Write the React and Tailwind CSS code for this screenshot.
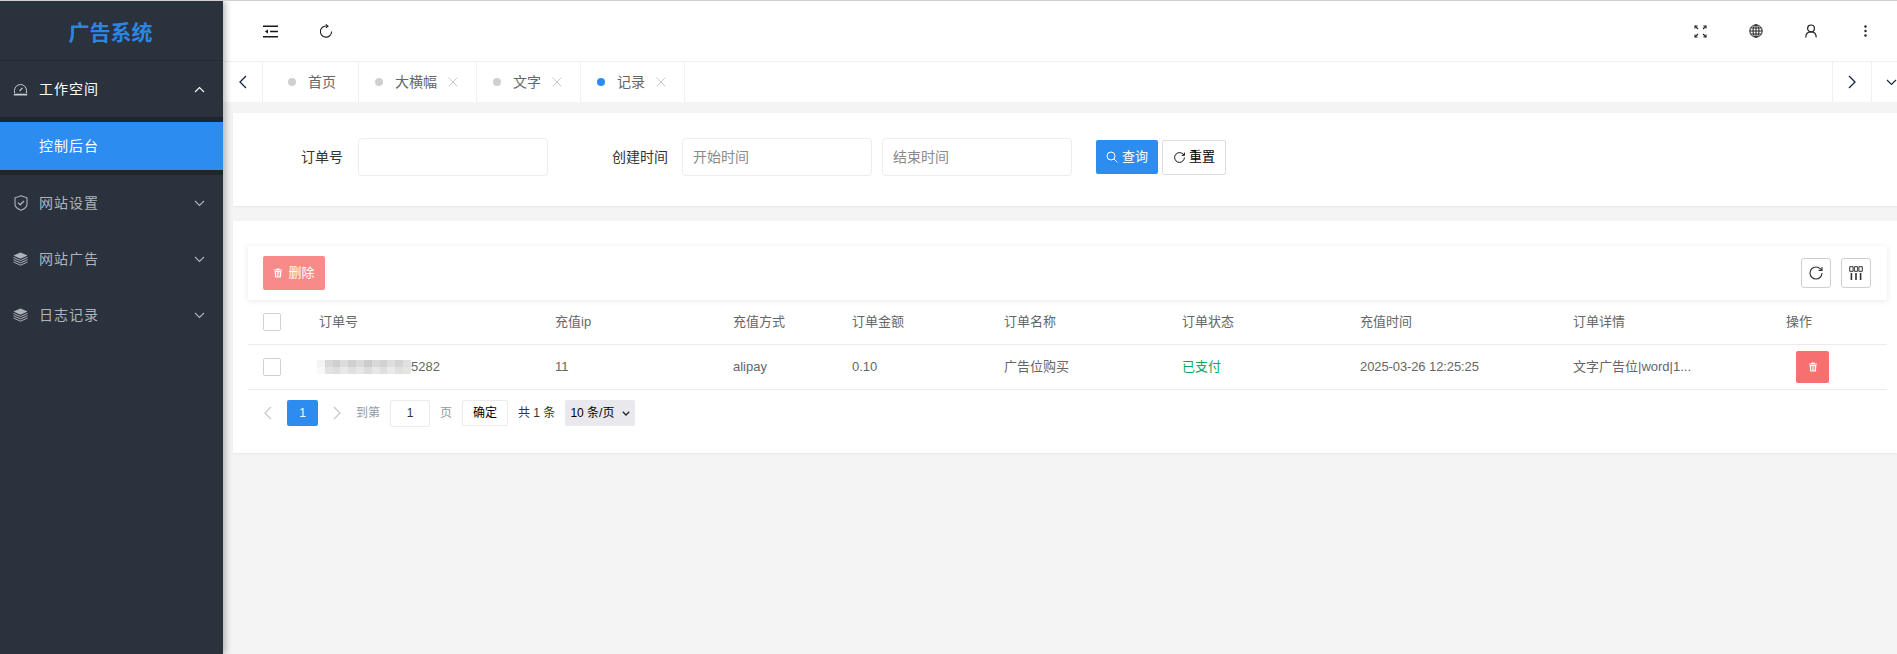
import React from "react";

const Gauge = () => (
  <svg width="15" height="13" viewBox="0 0 15 13" fill="none" stroke="#c8cacd" strokeWidth="1">
    <path d="M1.5 10V7.5a6 6 0 0 1 12 0V10" />
    <path d="M6.5 8l3-3.2" strokeWidth="1.2" />
    <path d="M.8 11.6h13.4" strokeWidth="1.8" />
  </svg>
);
const Shield = () => (
  <svg width="14" height="16" viewBox="0 0 14 16" fill="none" stroke="currentColor" strokeWidth="1.1">
    <path d="M7 .8l6 2v6.4c0 2.8-3 4.9-6 6-3-1.1-6-3.2-6-6V2.8z" />
    <path d="M4 7.6l2.2 2.2L10 6" strokeWidth="1.3" />
  </svg>
);
const Layers = () => (
  <svg width="15" height="14" viewBox="0 0 15 14" fill="none" stroke="currentColor" strokeWidth="1">
    <path d="M7.5.4L14.6 3.6 7.5 6.8.4 3.6z" fill="currentColor" stroke="none" />
    <path d="M.5 5.4l7 3.2 7-3.2M.5 7.7l7 3.2 7-3.2M.5 10l7 3.2 7-3.2" />
  </svg>
);
const Chev = ({ up }) => (
  <svg width="11" height="7" viewBox="0 0 11 7" fill="none" stroke="currentColor" strokeWidth="1.1">
    <path d={up ? "M1 6l4.5-4.5L10 6" : "M1 1l4.5 4.5L10 1"} />
  </svg>
);
const Refresh = ({ size = 14 }) => (
  <svg width={size} height={size} viewBox="0 0 14 14" fill="none" stroke="currentColor" strokeWidth="1.1">
    <path d="M8.6 2.2A5.6 5.6 0 1 0 12.6 7.6" />
    <path d="M6.8.4l2.2 1.8-2.2 1.7" />
  </svg>
);
const RotateCw = ({ size = 15 }) => (
  <svg width={size} height={size} viewBox="0 0 24 24" fill="none" stroke="currentColor" strokeWidth="1.7">
    <path d="M21 12a9 9 0 1 1-9-9c2.52 0 4.93 1 6.74 2.74L21 8" />
    <path d="M21 3v5h-5" />
  </svg>
);
const Trash = ({ size = 10 }) => (
  <svg width={size} height={size} viewBox="0 0 10 10" fill="currentColor">
    <path d="M3.6.4h2.8l.4 1h2.4v1H.8v-1h2.4zM1.6 3h6.8l-.5 6.6H2.1zm1.4 1v4.6h.8V4zm1.7 0v4.6h.8V4zm1.6 0v4.6h.7V4z" />
  </svg>
);
const X = () => (
  <svg width="10" height="10" viewBox="0 0 10 10" fill="none" stroke="#c8c8c8" strokeWidth="1">
    <path d="M.5.5l9 9M9.5.5l-9 9" />
  </svg>
);
const Arrow = ({ left, color = "#17233d", w = 8, h = 14 }) => (
  <svg width={w} height={h} viewBox="0 0 8 14" fill="none" stroke={color} strokeWidth="1.3">
    <path d={left ? "M7 1L1 7l6 6" : "M1 1l6 6-6 6"} />
  </svg>
);

const Menu = ({ icon, label, open }) => (
  <div className={`h-[56px] flex items-center pl-[13px] pr-[18px] ${open ? "text-white" : "text-[#b0b4ba]"}`}>
    <span className="w-[15px] flex justify-center">{icon}</span>
    <span className="ml-[11px] text-[14px] tracking-[1px] flex-1">{label}</span>
    <Chev up={open} />
  </div>
);

const Tab = ({ label, active, close, cls }) => (
  <div className={`h-full flex items-center border-r border-[#f0f0f0] ${cls}`}>
    <span className={`w-[8px] h-[8px] rounded-full ${active ? "bg-[#2d8cf0]" : "bg-[#cfcfcf]"}`} />
    <span className="ml-[12px] text-[14px] text-[#666]">{label}</span>
    {close && <span className="ml-[11px] flex"><X /></span>}
  </div>
);

const cols = "grid grid-cols-[72px_235px_178px_119px_152px_178px_178px_213px_213px_101px] items-center text-[13px] text-[#666] border-b border-[#ebebeb]";
const Box = () => <span className="block ml-[15px] w-[18px] h-[18px] bg-white border border-[#d0d0d0] rounded-[2px]" />;

const mosaic = [
  ["#f3f3f3", "#d8d8d8", "#cfcfcf", "#dcdcdc", "#d0d0d0", "#dadada", "#cccccc", "#d9d9d9", "#d2d2d2", "#dedede", "#d4d4d4", "#e0e0e0"],
  ["#f8f8f8", "#e2e2e2", "#dedede", "#e8e8e8", "#e0e0e0", "#e6e6e6", "#dcdcdc", "#e8e8e8", "#dfdfdf", "#eaeaea", "#e0e0e0", "#e4e4e4"],
];

export default function App() {
  return (
    <div className="w-[1897px] h-[654px] overflow-hidden flex flex-col bg-[#f4f4f4] border-t border-[#cfcfcf]" style={{ fontFamily: '"Liberation Sans", "Noto Sans CJK SC", sans-serif' }}>
      <div className="flex flex-1 min-h-0">
        <aside className="relative z-10 w-[223px] shrink-0 bg-[#29323d] shadow-[3px_0_6px_rgba(0,0,0,0.25)]">
          <div className="h-[60px] flex items-center justify-center border-b border-[#232b35] pt-[5px] pr-[2px]">
            <span className="text-[21px] font-bold text-[#2b85e4]">广告系统</span>
          </div>
          <Menu icon={<Gauge />} label="工作空间" open />
          <div className="bg-[#1e2730] py-[5px]">
            <div className="h-[48px] bg-[#2d8cf0] text-white text-[14px] tracking-[1px] flex items-center pl-[39px]">控制后台</div>
          </div>
          <Menu icon={<Shield />} label="网站设置" />
          <Menu icon={<Layers />} label="网站广告" />
          <Menu icon={<Layers />} label="日志记录" />
        </aside>

        <main className="flex-1 min-w-0 flex flex-col">
          <header className="h-[61px] shrink-0 bg-white border-b border-[#f0f0f0] flex items-center text-[#17171a]">
            <svg className="ml-[40px]" width="15" height="13" viewBox="0 0 15 13" fill="none" stroke="currentColor" strokeWidth="1.6">
              <path d="M0 1.2h15M7 6.5h8M0 11.8h15" />
              <path d="M5 4.4L1.8 6.5 5 8.6z" fill="currentColor" stroke="none" />
            </svg>
            <span className="ml-[41px] flex text-[#222]"><Refresh /></span>
            <div className="ml-auto flex items-center">
              <svg width="13" height="13" viewBox="0 0 13 13" fill="none" stroke="#222" strokeWidth="1.1">
                <path d="M1 1l3 3M12 1L9 4M1 12l3-3M12 12L9 9" />
                <path d="M1 3.6V1h2.6M12 3.6V1H9.4M1 9.4V12h2.6M12 9.4V12H9.4" />
              </svg>
              <svg className="ml-[42px]" width="14" height="14" viewBox="0 0 14 14" fill="none" stroke="#222" strokeWidth="1">
                <circle cx="7" cy="7" r="6.2" />
                <ellipse cx="7" cy="7" rx="3" ry="6.2" />
                <path d="M7 .8v12.4M.8 7h12.4M1.6 4h10.8M1.6 10h10.8" />
              </svg>
              <svg className="ml-[42px]" width="12" height="14" viewBox="0 0 12 14" fill="none" stroke="#222" strokeWidth="1.2">
                <circle cx="6" cy="4.4" r="3.4" />
                <path d="M.8 13.5c0-3.4 2-5.6 5.2-5.6s5.2 2.2 5.2 5.6" />
              </svg>
              <svg className="ml-[47px] mr-[30px]" width="3" height="12" viewBox="0 0 3 12" fill="#222">
                <circle cx="1.5" cy="1.5" r="1.2" />
                <circle cx="1.5" cy="6" r="1.2" />
                <circle cx="1.5" cy="10.5" r="1.2" />
              </svg>
            </div>
          </header>

          <div className="h-[40px] shrink-0 bg-white flex items-center">
            <div className="w-[40px] h-full flex items-center justify-center border-r border-[#f0f0f0]"><Arrow left /></div>
            <Tab label="首页" cls="pl-[25px] pr-[22px]" />
            <Tab label="大横幅" close cls="pl-[16px] pr-[18px]" />
            <Tab label="文字" close cls="pl-[16px] pr-[18px]" />
            <Tab label="记录" active close cls="pl-[16px] pr-[18px]" />
            <div className="ml-auto w-[40px] h-full flex items-center justify-center border-l border-r border-[#f0f0f0]"><Arrow /></div>
            <div className="w-[25px] h-full flex items-center pl-[14px] overflow-hidden text-[#17233d] shrink-0">
              <span className="shrink-0 flex"><Chev /></span>
            </div>
          </div>

          <div className="flex-1 pt-[11px] pl-[10px] flex flex-col gap-[15px]">
            <section className="h-[93px] bg-white flex items-center pl-[68px] pb-[5px] shadow-[0_1px_2px_rgba(0,0,0,0.06)]">
              <span className="text-[14px] text-[#333] w-[42px]">订单号</span>
              <span className="ml-[15px] w-[190px] h-[38px] border border-[#ebedf0] rounded-[4px]" />
              <span className="ml-[64px] text-[14px] text-[#333] w-[56px]">创建时间</span>
              <span className="ml-[14px] w-[190px] h-[38px] border border-[#ebedf0] rounded-[4px] flex items-center pl-[10px] text-[14px] text-[#8a8a8a]">开始时间</span>
              <span className="ml-[10px] w-[190px] h-[38px] border border-[#ebedf0] rounded-[4px] flex items-center pl-[10px] text-[14px] text-[#8a8a8a]">结束时间</span>
              <span className="ml-[24px] w-[62px] h-[34px] bg-[#2d8cf0] rounded-[2px] text-white text-[13px] flex items-center justify-center gap-[4px]">
                <svg width="12" height="12" viewBox="0 0 12 12" fill="none" stroke="currentColor" strokeWidth="1">
                  <circle cx="5" cy="5" r="4" />
                  <path d="M8 8l3.4 3.4" />
                </svg>
                查询
              </span>
              <span className="ml-[4px] w-[64px] h-[35px] border border-[#dcdee2] rounded-[2px] text-black text-[13px] flex items-center justify-center gap-[3px]">
                <RotateCw size={13} />
                重置
              </span>
            </section>

            <section className="h-[232px] bg-white pl-[15px] pr-[10px] pt-[25px] shadow-[0_1px_2px_rgba(0,0,0,0.06)]">
              <div className="h-[54px] flex items-center pl-[15px] pr-[16px] shadow-[0_1px_6px_rgba(0,0,0,0.09)]">
                <span className="w-[62px] h-[34px] bg-[#f98a8a] rounded-[2px] text-white text-[13px] flex items-center justify-center gap-[5px]">
                  <Trash />
                  删除
                </span>
                <span className="ml-auto w-[30px] h-[30px] border border-[#cfcfcf] rounded-[3px] flex items-center justify-center text-[#333]"><RotateCw size={16} /></span>
                <span className="ml-[10px] w-[30px] h-[30px] border border-[#cfcfcf] rounded-[3px] flex items-center justify-center">
                  <svg width="14" height="14" viewBox="0 0 14 14" fill="none" stroke="#333" strokeWidth="1">
                    <path d="M.7.7h3.4v4.6H.7zM5.3.7h3.4v4.6H5.3zM9.9.7h3.4v4.6H9.9z" />
                    <path d="M2.4 7v7M7 7v7M11.6 7v7" strokeWidth="1.6" />
                  </svg>
                </span>
              </div>

              <div className={`${cols} h-[45px]`}>
                <span><Box /></span>
                <span className="-ml-[1px]">订单号</span>
                <span>充值ip</span>
                <span>充值方式</span>
                <span>订单金额</span>
                <span>订单名称</span>
                <span>订单状态</span>
                <span>充值时间</span>
                <span>订单详情</span>
                <span>操作</span>
              </div>
              <div className={`${cols} h-[45px]`}>
                <span><Box /></span>
                <span className="flex items-center -ml-[3px]">
                  <span className="flex flex-col w-[94px]">
                    {mosaic.map((row, i) => (
                      <span key={i} className="flex h-[7px]">
                        {row.map((c, j) => (
                          <span key={j} className="flex-1" style={{ backgroundColor: c }} />
                        ))}
                      </span>
                    ))}
                  </span>
                  5282
                </span>
                <span>11</span>
                <span>alipay</span>
                <span>0.10</span>
                <span>广告位购买</span>
                <span className="text-[#0aa85c]">已支付</span>
                <span className="tracking-[-0.1px]">2025-03-26 12:25:25</span>
                <span>文字广告位|word|1...</span>
                <span className="pl-[10px]">
                  <span className="w-[33px] h-[32px] bg-[#f76f6f] rounded-[2px] flex items-center justify-center text-white"><Trash /></span>
                </span>
              </div>

              <div className="flex items-center h-[26px] mt-[10px] text-[12px]">
                <span className="ml-[16px] flex"><Arrow left color="#c9c9c9" /></span>
                <span className="ml-[15px] w-[31px] h-[26px] bg-[#2d8cf0] rounded-[2px] text-white flex items-center justify-center">1</span>
                <span className="ml-[15px] flex"><Arrow color="#c9c9c9" /></span>
                <span className="ml-[15px] text-[#999]">到第</span>
                <span className="ml-[10px] w-[40px] h-[27px] border border-[#ebebeb] rounded-[2px] flex items-center justify-center text-[#333]">1</span>
                <span className="ml-[10px] text-[#999]">页</span>
                <span className="ml-[10px] w-[46px] h-[26px] border border-[#ebebeb] rounded-[2px] flex items-center justify-center text-black">确定</span>
                <span className="ml-[10px] text-[#333]">共 1 条</span>
                <span className="ml-[10px] w-[70px] h-[26px] bg-[#e9e8ec] rounded-[2px] flex items-center pl-[5px] gap-[8px] text-black">
                  10 条/页
                  <svg width="8" height="5" viewBox="0 0 8 5" fill="none" stroke="#222" strokeWidth="1.3"><path d="M.8.8L4 4 7.2.8" /></svg>
                </span>
              </div>
            </section>
          </div>
        </main>
      </div>
    </div>
  );
}
